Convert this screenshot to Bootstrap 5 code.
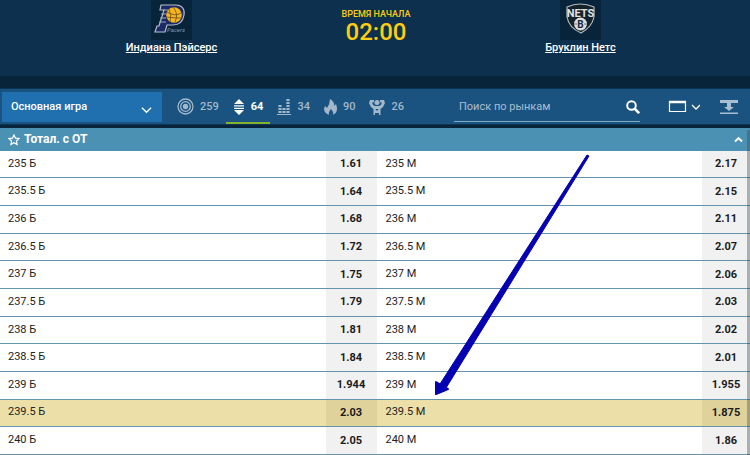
<!DOCTYPE html>
<html lang="ru">
<head>
<meta charset="utf-8">
<meta name="viewport" content="width=device-width, initial-scale=1">
<title>Индиана Пэйсерс — Бруклин Нетс</title>
<link href="https://cdn.jsdelivr.net/npm/bootstrap@5.3.0/dist/css/bootstrap.min.css" rel="stylesheet">
<style>
body{font-family:Roboto,"Liberation Sans",sans-serif;font-size:11px;line-height:16px;background:#08243a;color:#222}
.match{background:#0d304f;height:76px;margin-bottom:13px;padding-left:2px}
.teams{width:82%}
.crest{width:41px;height:40px;background:#08243a}
.team a{color:#fff;font-weight:500}
.start{color:#fc1;padding-top:6px}
.start-label{font-size:9px;font-weight:500}
.start-time{font-size:24px;line-height:20px;font-weight:500}
.tools{background:#1a5280;height:35px;margin-bottom:4px;box-shadow:0 0 0 1px #0c3555}
.game{appearance:none;width:160px;height:30px;margin:3px 8px 2px 2px;border:0;border-radius:0;font-size:11px;font-weight:500;color:#fff;padding:0 28px 0 9px;background:#2070b0 url("data:image/svg+xml,%3Csvg xmlns='http://www.w3.org/2000/svg' viewBox='0 0 12 8'%3E%3Cpath d='M1 1.5l5 5 5-5' fill='none' stroke='%23fff' stroke-width='1.4'/%3E%3C/svg%3E") no-repeat right 10px top 14px/11px 8px}
.tab{border:0;background:none;color:#a3b9ca;font-size:11px;font-weight:500;height:35px;padding:0 7px;gap:6px}
.tab.on{color:#fff;padding-top:2px;border-bottom:2px solid #86b32f;font-weight:700}
.find{width:186px;height:29px;border-bottom:1px solid #87a8c1}
.find input{background:none;border:0;outline:0;color:#fff;min-width:0;padding:0 0 0 5px}
.find input::placeholder{color:#a9bfd1;opacity:1}
.tool{background:none;border:0;padding:0;color:#fff}
.market{background:#4b91b4;color:#fff;height:23px;padding:0 7px 0 8px}
.market h2{font-size:12px;line-height:23px;font-weight:700;margin:0}
.odds{background:#fff;width:100%;table-layout:fixed;border-collapse:collapse}
.odds td{border-bottom:1px solid #6493ad;padding:0 0 1px 8px;vertical-align:middle}
.odds td+td+td{padding-left:9px}
.odds .price,.odds .price:last-child{background:#f1f1f1;text-align:center;font-weight:700;padding:0;color:#1b1b1b}
.odds .pick td{background:#ecdfa8}
.odds .pick .price{background:#e0d29b}
.c-price{width:51px}.c-last{width:48px}
.scroller{position:absolute;top:2px;right:0;bottom:0;width:3px;background:rgba(60,70,75,.38)}
.pointer{position:absolute;left:434px;top:25px;width:156px;height:244px;pointer-events:none}
</style>
</head>
<body>
<div class="d-flex flex-column min-vh-100">
<header class="match">
<div class="teams row g-0 mx-auto text-center">
<div class="team col">
<div class="crest mx-auto"><svg width="41" height="40" viewBox="0 0 41 40" aria-hidden="true">
<path d="M10 5H25C31 5 34 9 33 15C32 21 28 25 22 25H16L14 32H4L6 26H8L13 10H9Z" fill="#1b2a66" stroke="#b7bdc9" stroke-width="1.200"/>
<path d="M8 22H15M9 18H15M10 14H15M12 10H17" stroke="#9da5b7"/>
<circle cx="23" cy="15" r="7.800" fill="#f5b51f"/><path d="M16 12q8 5 14 1M15 17q8 1 15 1M22 7q6 7 2 15M18 9q3 7 1 13" fill="none" stroke="#6c4a1b" stroke-width=".8"/>
<text x="16" y="32" font-size="6" font-style="italic" fill="#8494b3">Pacers</text></svg></div>
<a href="#indiana">Индиана Пэйсерс</a></div>
<div class="start col"><div class="start-label">ВРЕМЯ НАЧАЛА</div><div class="start-time">02:00</div></div>
<div class="team col">
<div class="crest mx-auto"><svg width="41" height="40" viewBox="0 0 41 40" aria-hidden="true">
<path d="M7 7Q20 1 34 7L34 17Q32 27 21 33Q9 28 7 17Z" fill="#14222b" stroke="#b4babd" stroke-width="1.200"/>
<text x="20.500" y="17" text-anchor="middle" font-size="11" font-weight="700" fill="#e1e4e5">NETS</text>
<circle cx="20.500" cy="24" r="6.500" fill="#ddd"/><text x="20.500" y="28" text-anchor="middle" font-size="10" font-weight="700" fill="#152b39">B</text><path d="M14 24h3M24 24h3" stroke="#667580"/></svg></div>
<a href="#brooklyn">Бруклин Нетс</a></div>
</div>
</header>
<nav class="tools d-flex align-items-start" aria-label="Рынки">
<select class="game" aria-label="Период"><option>Основная игра</option></select>
<button class="tab d-flex align-items-center"><svg width="17" height="17" viewBox="0 0 17 17" fill="none" stroke="currentColor" stroke-width="1.300"><circle cx="8.500" cy="8.500" r="7.500"/><circle cx="8.500" cy="8.500" r="4.800"/><circle cx="8.500" cy="8.500" r="2" fill="currentColor"/></svg>259</button>
<button class="tab on d-flex align-items-center"><svg width="12" height="16" viewBox="0 0 12 16" fill="currentColor"><path d="M6 0l5 5H1zM1 6.300h10v1.200H1zM1 8.700h10v1.200H1zM1 11h10l-5 5z"/></svg>64</button>
<button class="tab d-flex align-items-center"><svg width="14" height="16" viewBox="0 0 14 16" fill="none" stroke="currentColor"><path d="M0 15.500h14"/><path d="M3 14V5M7 14V8M11 14V0" stroke-width="3.200" stroke-dasharray="2 1"/></svg>34</button>
<button class="tab d-flex align-items-center"><svg width="13" height="16" viewBox="0 0 13 16" fill="currentColor"><path d="M6 0q5 3 4 7l2-2q3 8-3 11 1-3-2-6-3 3-2 6-7-3-4-9l2 2Q6 5 6 0Z"/></svg>90</button>
<button class="tab d-flex align-items-center"><svg width="16" height="16" viewBox="0 0 16 16" fill="currentColor"><path d="M1 1h4v2.200H3.200L4 6l2 1h4l2-1 .8-2.800H11V1h4l1 3-2 4-2.500 2V16H10v-2H6v2H4.500v-6L2 8 0 4z"/><circle cx="8" cy="3.500" r="2.500"/><path d="M6.500 10h3L8 12z" fill="#1a5280"/></svg>26</button>
<form class="find d-flex align-items-center ms-auto mt-1" role="search"><input class="flex-grow-1" type="search" aria-label="Поиск по рынкам" placeholder="Поиск по рынкам"><button type="button" class="tool d-flex" aria-label="Найти"><svg width="14" height="14" viewBox="0 0 14 14" fill="none" stroke="currentColor" stroke-width="2"><circle cx="5.500" cy="5.500" r="4.300"/><path d="M8.800 8.800l4.400 4.400" stroke-width="2.600"/></svg></button></form>
<button class="tool d-flex align-self-center ms-4" aria-label="Вид"><svg class="ms-1" width="32" height="13" viewBox="0 0 32 13" fill="none" stroke="currentColor"><path d="M1.500 1v10.500h16V1" stroke-width="1.200"/><path d="M1 2h17" stroke-width="2.500"/><path d="M24 5l4 4 4-4" stroke-width="1.300"/></svg></button>
<button class="tool d-flex align-self-center ms-3 me-2" aria-label="Свернуть все"><svg class="ms-1 me-1" width="18" height="14" viewBox="0 0 18 14" fill="#a9bfd1"><path d="M0 0h18v3H11v4h3l-5 4-5-4h3V3H0zM0 12.500h18V14H0z"/></svg></button>
</nav>
<main class="position-relative flex-grow-1 d-flex flex-column">
<div class="market d-flex align-items-center">
<svg class="me-1" width="12" height="12" viewBox="0 0 12 12" fill="none" stroke="#fff" stroke-width="1.200"><path d="M6 1l1.500 3.200 3.500.4-2.600 2.400.7 3.500L6 8.800l-3.100 1.700.7-3.500L1 4.600l3.500-.4z"/></svg>
<h2>Тотал. с ОТ</h2>
<button class="tool d-flex ms-auto" aria-label="Свернуть"><svg width="9" height="7" viewBox="0 0 9 7" fill="none" stroke="currentColor" stroke-width="1.800"><path d="M1 5.500L4.500 2 8 5.500"/></svg></button>
</div>
<table class="odds flex-grow-1">
<colgroup><col><col class="c-price"><col><col class="c-last"></colgroup>
<tbody>
<tr><td>235 Б</td><td class="price">1.61</td><td>235 М</td><td class="price">2.17</td></tr>
<tr><td>235.5 Б</td><td class="price">1.64</td><td>235.5 М</td><td class="price">2.15</td></tr>
<tr><td>236 Б</td><td class="price">1.68</td><td>236 М</td><td class="price">2.11</td></tr>
<tr><td>236.5 Б</td><td class="price">1.72</td><td>236.5 М</td><td class="price">2.07</td></tr>
<tr><td>237 Б</td><td class="price">1.75</td><td>237 М</td><td class="price">2.06</td></tr>
<tr><td>237.5 Б</td><td class="price">1.79</td><td>237.5 М</td><td class="price">2.03</td></tr>
<tr><td>238 Б</td><td class="price">1.81</td><td>238 М</td><td class="price">2.02</td></tr>
<tr><td>238.5 Б</td><td class="price">1.84</td><td>238.5 М</td><td class="price">2.01</td></tr>
<tr><td>239 Б</td><td class="price">1.944</td><td>239 М</td><td class="price">1.955</td></tr>
<tr class="pick"><td>239.5 Б</td><td class="price">2.03</td><td>239.5 М</td><td class="price">1.875</td></tr>
<tr><td>240 Б</td><td class="price">2.05</td><td>240 М</td><td class="price">1.86</td></tr>
</tbody>
</table>
<div class="scroller"></div>
<svg class="pointer" viewBox="0 0 156 244" fill="#0400b2" stroke="#0400b2" stroke-linejoin="round" aria-hidden="true"><path d="M153 2L155 3 12 235 6 231Z" stroke-width="1"/><path d="M2 229L14 236 2 241Z" stroke-width="2"/></svg>
</main>
</div>
<script src="https://cdn.jsdelivr.net/npm/bootstrap@5.3.0/dist/js/bootstrap.bundle.min.js"></script>
</body>
</html>
